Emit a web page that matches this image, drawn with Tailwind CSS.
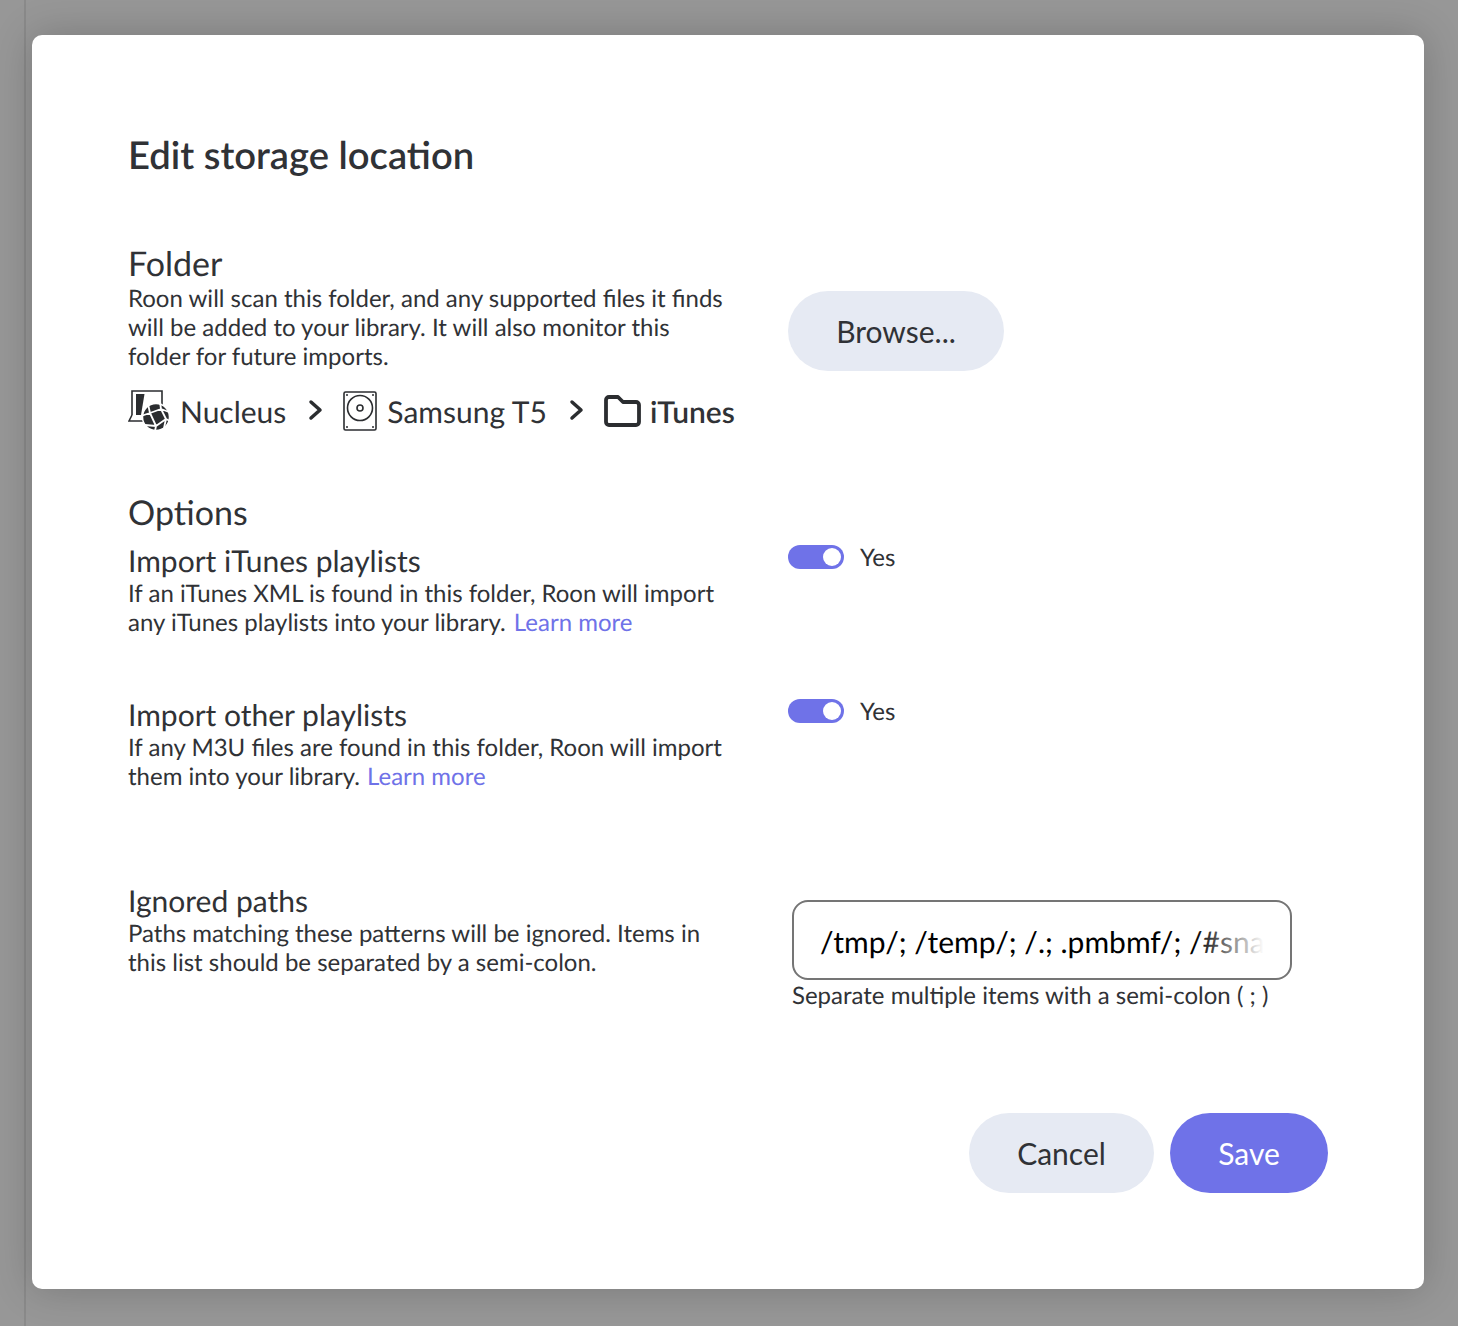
<!DOCTYPE html>
<html lang="en">
<head>
  <meta charset="UTF-8">
  <title>Edit storage location</title>
  <script src="https://cdn.jsdelivr.net/npm/@tailwindcss/browser@4"></script>
</head>
<body class="bg-[#979797] font-['Lato',sans-serif] text-[#303236] [text-rendering:geometricPrecision]">
  <div class="relative h-[1326px] w-[1458px] overflow-hidden pt-[35px] pl-[32px]">
    <div class="absolute left-[24px] top-0 h-full w-[2px] bg-[#8a8a8a]"></div>
    <div class="relative h-[1254px] w-[1392px] rounded-[10px] bg-white pl-[96px] pt-[96px] shadow-[0_0_40px_rgba(0,0,0,0.2)]">
      <h1 class="text-[38.2px] font-semibold leading-[48px]">Edit storage location</h1>

      <!-- folder -->
      <div class="mt-[65px] flex">
        <div class="w-[660px]">
          <h2 class="text-[34px] leading-[40px]">Folder</h2>
          <p class="w-[600px] text-[24px] leading-[29px]">Roon will scan this folder, and any supported files it finds will be added to your library. It will also monitor this folder for future imports.</p>
          <div class="mt-[19px] flex h-[44px] items-center text-[30px]">
            <svg class="h-[44px] w-[44px]" viewBox="0 0 44 44" fill="none" stroke="#2b2d30" stroke-width="1.6">
              <path d="M4 25V1h30v14"/>
              <path d="M8 4h8.500l-3.500 21H8z" fill="#2b2d30" stroke="none"/>
              <path d="M4 25L1 31h16"/>
              <circle cx="28" cy="27" r="13.500" fill="#2b2d30" stroke="white" stroke-width="1.500"/>
              <path d="M22 23l11-4 5 10-10 7zM22 23l-2-9M22 23l-9 3M33 19l-1-7M33 19l8 3M38 29l4 2M38 29l-2 9M28 36l-1 5M28 36l-11-1M22 23l6 13" stroke="white" stroke-width="1.800" stroke-linejoin="round"/>
            </svg>
            <span class="ml-[8px]">Nucleus</span>
            <svg class="mt-[-4px] ml-[22px] h-[24px] w-[16px]" viewBox="0 0 16 24" fill="none" stroke="#2b2d30" stroke-width="3.500" stroke-linecap="round" stroke-linejoin="round"><path d="M3 4l9 8-9 8"/></svg>
            <svg class="mt-[-2px] ml-[19px] h-[40px] w-[34px]" viewBox="0 0 34 40" fill="none" stroke="#2b2d30" stroke-width="1.600">
              <rect x="1" y="1" width="32" height="38" rx="1.500"/>
              <circle cx="17" cy="17" r="12.500"/>
              <circle cx="17" cy="17" r="3"/>
              <g fill="#2b2d30" stroke="none"><circle cx="4" cy="4" r="1"/><circle cx="30" cy="4" r="1"/><circle cx="4" cy="36" r="1"/><circle cx="30" cy="36" r="1"/></g>
            </svg>
            <span class="ml-[10px]">Samsung T5</span>
            <svg class="mt-[-4px] ml-[22px] h-[24px] w-[16px]" viewBox="0 0 16 24" fill="none" stroke="#2b2d30" stroke-width="3.500" stroke-linecap="round" stroke-linejoin="round"><path d="M3 4l9 8-9 8"/></svg>
            <svg class="mt-[-2px] ml-[19px] h-[32px] w-[37px]" viewBox="0 0 37 32" fill="none" stroke="#2b2d30" stroke-width="3.800" stroke-linejoin="round"><path d="M2 5a3 3 0 0 1 3-3h9l5 5h13a3 3 0 0 1 3 3v17a3 3 0 0 1-3 3H5a3 3 0 0 1-3-3z"/></svg>
            <span class="ml-[9px] font-semibold">iTunes</span>
          </div>
        </div>
        <div class="pt-[47px]">
          <button class="h-[80px] w-[216px] rounded-full bg-[#e6eaf3] text-[30px]">Browse...</button>
        </div>
      </div>

      <!-- options -->
      <h2 class="mt-[59px] text-[34px] leading-[40px]">Options</h2>
      <div class="mt-[9px] flex">
        <div class="w-[660px]">
          <h3 class="text-[30px] leading-[38px]">Import iTunes playlists</h3>
          <p class="mt-[-1px] w-[620px] text-[24px] leading-[29px]">If an iTunes XML is found in this folder, Roon will import any iTunes playlists into your library. <a class="ml-[2px] text-[#6f72e8]">Learn more</a></p>
        </div>
        <div class="mt-[-4px] flex h-[38px] items-center">
          <div class="flex h-[24px] w-[56px] items-center justify-end rounded-full bg-[#6f72e8] pr-[3px]"><div class="h-[18px] w-[18px] rounded-full bg-white"></div></div>
          <span class="mt-[2px] ml-[16px] text-[24px]">Yes</span>
        </div>
      </div>
      <div class="mt-[59px] flex">
        <div class="w-[660px]">
          <h3 class="text-[30px] leading-[38px]">Import other playlists</h3>
          <p class="mt-[-1px] w-[620px] text-[24px] leading-[29px]">If any M3U files are found in this folder, Roon will import them into your library. <a class="ml-[1px] text-[#6f72e8]">Learn more</a></p>
        </div>
        <div class="mt-[-4px] flex h-[38px] items-center">
          <div class="flex h-[24px] w-[56px] items-center justify-end rounded-full bg-[#6f72e8] pr-[3px]"><div class="h-[18px] w-[18px] rounded-full bg-white"></div></div>
          <span class="mt-[2px] ml-[16px] text-[24px]">Yes</span>
        </div>
      </div>

      <!-- ignored paths -->
      <div class="mt-[91px] flex">
        <div class="w-[664px]">
          <h3 class="text-[30px] leading-[38px]">Ignored paths</h3>
          <p class="mt-[-1px] w-[600px] text-[24px] leading-[29px]">Paths matching these patterns will be ignored. Items in this list should be separated by a semi-colon.</p>
        </div>
        <div class="mt-[18px]">
          <div class="relative flex h-[80px] w-[500px] items-center overflow-hidden rounded-[16px] border-2 border-[#757575] pt-[4px] pl-[26px] text-[30px] whitespace-nowrap text-black">
            <span class="w-[444px] overflow-hidden">/tmp/; /temp/; /.; .pmbmf/; /#snapshot/</span>
            <div class="absolute top-0 right-[26px] bottom-0 w-[70px] bg-gradient-to-r from-white/0 to-white"></div>
          </div>
          <p class="text-[24px] leading-[31px]">Separate multiple items with a semi-colon ( ; )</p>
        </div>
      </div>

      <!-- footer -->
      <div class="absolute right-[96px] bottom-[96px] flex gap-[16px] text-[30px]">
        <button class="h-[80px] w-[185px] rounded-full bg-[#e6eaf3]">Cancel</button>
        <button class="h-[80px] w-[158px] rounded-full bg-[#6f72e8] text-white">Save</button>
      </div>
    </div>
  </div>
</body>
</html>
